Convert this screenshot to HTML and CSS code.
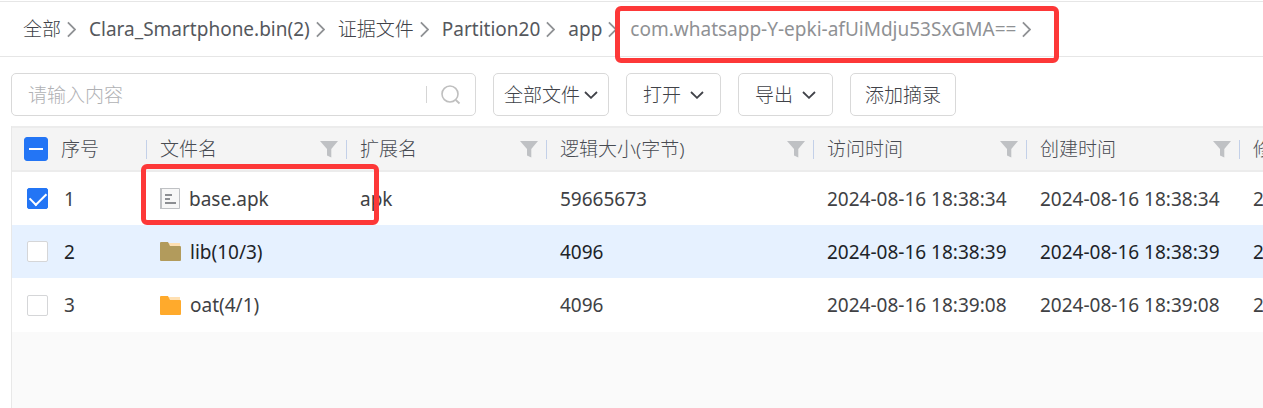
FILE: index.html
```html
<!DOCTYPE html>
<html lang="zh-CN">
<head>
<meta charset="utf-8">
<title>文件浏览</title>
<link rel="stylesheet" href="styles.css">
</head>
<body>
<svg class="sprite" aria-hidden="true">
  <symbol id="right" viewBox="0 0 10 18"><path d="M1 1 9 9 1 17" fill="none" stroke="currentColor" stroke-width="2"/></symbol>
  <symbol id="down" viewBox="0 0 14 8"><path d="M1 1 7 6.800 13 1" fill="none" stroke="currentColor" stroke-width="1.8"/></symbol>
  <symbol id="funnel" viewBox="0 0 18 17"><path d="M0 0H18L11.300 8V16.500L7 14.500V8Z" fill="currentColor"/></symbol>
  <symbol id="folder" viewBox="0 0 21 19"><path class="flap" d="M8 1H20V6H8Z"/><path d="M0 1Q0 0 1 0H8L10 4H20Q21 4 21 5V18Q21 19 20 19H1Q0 19 0 18Z" fill="currentColor"/></symbol>
</svg>
<nav class="crumbs" aria-label="路径">
  <span class="crumb zh"><a href="#">全部</a><svg class="right"><use href="#right"/></svg></span>
  <span class="crumb"><a href="#">Clara_Smartphone.bin(2)</a><svg class="right"><use href="#right"/></svg></span>
  <span class="crumb zh"><a href="#">证据文件</a><svg class="right"><use href="#right"/></svg></span>
  <span class="crumb"><a href="#">Partition20</a><svg class="right"><use href="#right"/></svg></span>
  <span class="crumb"><a href="#">app</a><svg class="right"><use href="#right"/></svg></span>
  <span class="crumb current"><a href="#" aria-current="page">com.whatsapp-Y-epki-afUiMdju53SxGMA==</a><svg class="right"><use href="#right"/></svg><span class="mark mark-path"></span></span>
</nav>
<main class="content">
  <div class="toolbar">
    <form class="search">
      <input type="text" placeholder="请输入内容" aria-label="请输入内容">
      <button type="button" class="search-go" aria-label="搜索"><svg viewBox="0 0 20 20"><circle cx="9" cy="9" r="8" fill="none" stroke="currentColor" stroke-width="1.6"/><path d="M14.800 15 18.500 18.500" stroke="currentColor" stroke-width="1.800"/></svg></button>
    </form>
    <button type="button" class="btn tight">全部文件<svg class="down"><use href="#down"/></svg></button>
    <button type="button" class="btn">打开<svg class="down"><use href="#down"/></svg></button>
    <button type="button" class="btn">导出<svg class="down"><use href="#down"/></svg></button>
    <button type="button" class="btn plain">添加摘录</button>
  </div>
  <div class="grid">
    <table>
      <colgroup><col class="c-no"><col class="c-name"><col class="c-ext"><col class="c-size"><col class="c-time"><col class="c-time"><col class="c-time"></colgroup>
      <thead>
        <tr>
          <th class="no"><label class="pick"><input type="checkbox" class="all">序号</label></th>
          <th><div class="head">文件名<svg class="funnel"><use href="#funnel"/></svg></div></th>
          <th><div class="head">扩展名<svg class="funnel"><use href="#funnel"/></svg></div></th>
          <th><div class="head">逻辑大小(字节)<svg class="funnel"><use href="#funnel"/></svg></div></th>
          <th><div class="head">访问时间<svg class="funnel"><use href="#funnel"/></svg></div></th>
          <th><div class="head">创建时间<svg class="funnel"><use href="#funnel"/></svg></div></th>
          <th><div class="head">修改时间<svg class="funnel"><use href="#funnel"/></svg></div></th>
        </tr>
      </thead>
      <tbody>
        <tr>
          <td class="no"><label class="pick"><input type="checkbox" checked>1</label></td>
          <td class="marked"><div class="file"><svg class="doc" viewBox="0 0 20 21"><path d="M.5.5H19.500V20.500H.500Z" fill="#f7f7f7" stroke="#bfc1c4"/><path d="M1 0V21" stroke="#bfc1c4" stroke-width="2"/><path d="M5 7H12M5 11H10M5 15H16" stroke="#8c8e92" stroke-width="2"/></svg>base.apk</div><span class="mark mark-file"></span></td>
          <td>apk</td><td>59665673</td><td>2024-08-16 18:38:34</td><td>2024-08-16 18:38:34</td><td>2024-08-16 18:38:34</td>
        </tr>
        <tr class="active">
          <td class="no"><label class="pick"><input type="checkbox">2</label></td>
          <td><div class="file"><svg class="folder"><use href="#folder"/></svg>lib(10/3)</div></td>
          <td></td><td>4096</td><td>2024-08-16 18:38:39</td><td>2024-08-16 18:38:39</td><td>2024-08-16 18:38:39</td>
        </tr>
        <tr>
          <td class="no"><label class="pick"><input type="checkbox">3</label></td>
          <td><div class="file"><svg class="folder"><use href="#folder"/></svg>oat(4/1)</div></td>
          <td></td><td>4096</td><td>2024-08-16 18:39:08</td><td>2024-08-16 18:39:08</td><td>2024-08-16 18:39:08</td>
        </tr>
      </tbody>
    </table>
  </div>
</main>
</body>
</html>
```

FILE: styles.css
```css
* { box-sizing: border-box; }
body {
  margin: 0;
  min-height: 100vh;
  display: flex;
  flex-direction: column;
  background: #fff;
  color: #404144;
  font: 300 19px/28px "Noto Sans", "Noto Sans CJK SC", sans-serif;
  overflow-x: hidden;
}
svg { display: block; flex: none; }
.sprite { position: absolute; width: 0; height: 0; }
input, button { font: inherit; color: inherit; }

.crumbs {
  display: flex;
  gap: 13px;
  margin-top: 1px;
  padding: 13px 23px;
  border-top: 1px solid #e6e6e6;
  border-bottom: 1px solid #e6e6e6;
  white-space: nowrap;
}
.crumb { display: flex; align-items: center; gap: 6px; position: relative; color: #55585d; font-weight: 400; }
.crumb.zh { font-weight: 300; color: #404248; }
.crumb a { color: inherit; text-decoration: none; }
.crumb.current { color: #8f9194; }
.right { width: 9px; height: 17px; color: #8f9194; }

.mark { position: absolute; z-index: 2; border: 5px solid #fd3838; border-radius: 6px; pointer-events: none; }
.mark-path { inset: -9px -28px -20px -15px; }
.mark-file { inset: -8px -33px 0 -5px; }

.content { flex: 1; display: flex; flex-direction: column; padding: 16px 0 0 11px; }
.toolbar { display: flex; gap: 17px; margin-bottom: 10px; }
.search {
  display: flex;
  align-items: center;
  width: 38%;
  max-width: 465px;
  height: 43px;
  margin: 0;
  border: 1px solid #d9d9d9;
  border-radius: 5px;
}
.search input { flex: 1; min-width: 0; padding: 0 16px; border: 0; outline: 0; background: none; }
.search input::placeholder { color: #b0b1b4; opacity: 1; }
.search-go { height: 17px; padding: 0 14px; border: 0; border-left: 1px solid #d5d5d5; background: none; color: #bfbfbf; display: flex; align-items: center; }
.search-go svg { width: 20px; height: 20px; }
.btn {
  display: flex;
  align-items: center;
  gap: 9px;
  height: 43px;
  padding: 0 16px;
  border: 1px solid #d9d9d9;
  border-radius: 5px;
  background: #fff;
  color: #404248;
}
.btn.tight { gap: 4px; padding: 0 10px; }
.btn.plain { padding: 0 14px; }
.down { width: 14px; height: 8px; }

.grid { flex: 1; overflow: hidden; border-left: 1px solid #e8e8e8; background: #fafafa; }
table { table-layout: fixed; width: 1440px; border-collapse: separate; border-spacing: 0; }
.c-no { width: 134px; }
.c-name, .c-ext { width: 200px; }
.c-size { width: 267px; }
.c-time { width: 213px; }
th, td { padding: 0 0 0 14px; text-align: left; font-weight: 400; white-space: nowrap; }
th { height: 46px; background: #f4f4f4; border-top: 2px solid #ececec; border-bottom: 2px solid #ececec; color: #484b52; font-weight: 300; }
td { height: 53px; background: #fff; }
tr:last-child td { height: 54px; }
.active td { background: #e6f1ff; color: #202328; }
.no { padding-left: 15px; }
th.no { padding-left: 12px; }
.pick { display: flex; align-items: center; gap: 16px; }
th .pick { gap: 13px; }
.head { display: flex; align-items: center; justify-content: space-between; padding-right: 8px; position: relative; }
.head::before { content: ""; position: absolute; left: -14px; top: 5px; width: 1px; height: 19px; background: #c3d0e8; }
.funnel { width: 18px; height: 17px; color: #bfc1c4; }
.marked { position: relative; }
.file { display: flex; align-items: center; gap: 9px; }
.doc { width: 20px; height: 21px; }
.folder { width: 21px; height: 19px; color: #ffaa2c; }
.flap { fill: #ffe0b2; }
.active .folder { color: #b29b5c; }
.active .flap { fill: #d6d3cb; }

input[type="checkbox"] {
  appearance: none;
  display: grid;
  place-items: center;
  flex: none;
  width: 21px;
  height: 21px;
  margin: 0;
  border: 1px solid #d5d6d8;
  border-radius: 2px;
  background: #fff;
}
input[type="checkbox"]:checked { border-color: #2375f5; background: #2375f5; }
input[type="checkbox"]:checked::before {
  content: "";
  width: 14px;
  height: 8px;
  border: solid #fff;
  border-width: 0 0 2px 2px;
  transform: translateY(-2px) rotate(-45deg);
}
input[type="checkbox"].all { width: 24px; height: 24px; border-radius: 3px; border-color: #2375f5; background: #2375f5; }
input.all::before { content: ""; width: 14px; height: 2px; background: #fff; }
```
